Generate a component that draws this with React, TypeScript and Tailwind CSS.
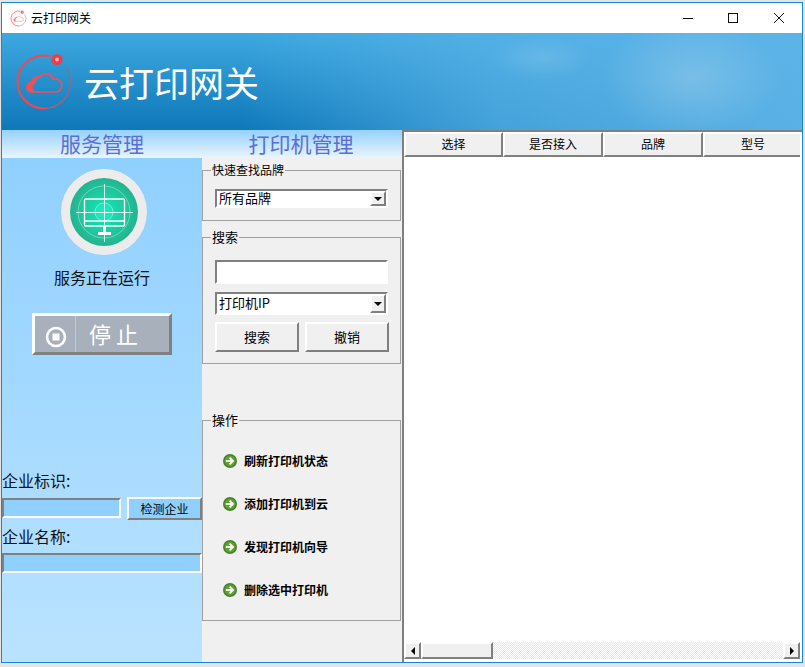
import React from "react";

const raised = "border-2 border-t-white border-l-white border-r-[#808080] border-b-[#808080]";
const sunken = "border-2 border-t-[#808080] border-l-[#808080] border-r-white border-b-white";

function Logo({ size, faded }: { size: number; faded?: boolean }) {
  const id = faded ? "a1" : "a2";
  return (
    <svg width={size} height={size} viewBox="0 0 60 60" fill="none" className={faded ? "opacity-80" : ""}>
      <defs>
        <linearGradient id={id} x1="30" y1="56" x2="52" y2="15" gradientUnits="userSpaceOnUse">
          <stop offset="0" stopColor="#e0505f" />
          <stop offset="0.5" stopColor="#a0607a" />
          <stop offset="1" stopColor="#6a7a9a" />
        </linearGradient>
      </defs>
      <path d="M36.5 4.3 A26.5 26.5 0 1 0 30 56.5" stroke="#f5464f" strokeWidth={faded ? 3 : 2} />
      <path d="M30 56.5 A26.5 26.5 0 0 0 52.2 15.5" stroke={`url(#${id})`} strokeWidth={faded ? 2 : 1.4} />
      <circle cx="43" cy="7.5" r="5.5" fill="#f23b47" />
      <circle cx="43" cy="7.5" r="2" fill="#ffb0b0" />
      <path d="M19 40 C11 40 11 31 18 30 C19 25 24 24 26 25 C29 20 38 21 39 27 C46 26 49 31 47 36 C46 39 44 40 41 40 Z" stroke="#f54d55" strokeWidth="1.6" />
      <path d="M19 40 C11 40 11 31 18 30 C19 25 24 24 26 25 C23 27 21 29 22 31 C18 32 17 37 22 40 Z" fill="#f54d55" />
    </svg>
  );
}

function Monitor() {
  return (
    <div className="w-[86px] h-[86px] rounded-full bg-[#ececec] flex items-center justify-center">
      <div className="w-[68px] h-[68px] rounded-full bg-[radial-gradient(circle,#10eeba_0%,#1fc49c_50%,#2c9a7c_100%)] flex items-center justify-center">
        <svg width="68" height="68" viewBox="0 0 68 68" fill="none">
          <circle cx="34" cy="34" r="26" stroke="#ffffff" strokeOpacity="0.35" />
          <circle cx="34" cy="34" r="9" stroke="#ffffff" strokeOpacity="0.4" fill="#20f0c0" fillOpacity="0.4" />
          <path d="M6 34.5H63M34.5 6V64" stroke="#ffffff" strokeOpacity="0.85" />
          <rect x="14.5" y="21" width="40" height="27" rx="1" stroke="#ffffff" strokeWidth="1.4" />
          <path d="M14.5 43H54.5" stroke="#ffffff" strokeWidth="1.4" />
          <path d="M33 48H36V54H41V57H28V54H33Z" fill="#ffffff" />
        </svg>
      </div>
    </div>
  );
}

function Arrow() {
  return (
    <svg width="14" height="14" viewBox="0 0 14 14" className="shrink-0">
      <circle cx="7" cy="7" r="7" fill="#4a8228" />
      <circle cx="7" cy="7" r="5.4" fill="#5f9e38" />
      <path d="M2.8 7H9M6.6 3.6L10 7L6.6 10.4" fill="none" stroke="#f4f8ea" strokeWidth="2" />
    </svg>
  );
}

function Drop({ h }: { h: string }) {
  return (
    <div className={`w-[16px] ${h} ${raised} bg-[#f0f0f0] flex items-center justify-center`}>
      <div className="w-0 h-0 border-x-[4px] border-x-transparent border-t-[4px] border-t-black" />
    </div>
  );
}

function Select({ text, h, ml }: { text: string; h: string; ml: string }) {
  return (
    <div className={`${ml} w-[173px] ${h} ${sunken} bg-white flex items-center justify-between text-[13px] leading-none pl-[2px]`}>
      <span className="-mt-[2px]">{text}</span>
      <Drop h="h-full" />
    </div>
  );
}

function Group({ title, className, size, children }: { title: string; className: string; size: string; children: React.ReactNode }) {
  return (
    <fieldset className={`w-[199px] border border-[#a0a0a0] ${className}`}>
      <legend className={`ml-[8px] px-[1px] h-[16px] leading-[16px] ${size}`}>{title}</legend>
      {children}
    </fieldset>
  );
}

const actions = ["刷新打印机状态", "添加打印机到云", "发现打印机向导", "删除选中打印机"];
const columns = [
  { name: "选择", width: "w-[99px]" },
  { name: "是否接入", width: "w-[100px]" },
  { name: "品牌", width: "w-[100px]" },
  { name: "型号", width: "w-[100px]" },
];

export default function App() {
  return (
    <div className="w-[805px] h-[667px] bg-[#e4e4e4] pt-[2px] overflow-hidden text-black font-['Noto_Sans_CJK_SC','Noto_Sans',sans-serif]">
      <div className="ml-[1px] w-[802px] h-[661px] border border-[#1a86d8] bg-white flex flex-col">
        <div className="h-[30px] bg-white flex items-center shrink-0">
          <div className="ml-[8px] w-[17px] flex justify-center"><Logo size={17} faded /></div>
          <span className="ml-[4px] text-[12px] leading-none">云打印网关</span>
          <div className="ml-auto flex items-center mb-[1px]">
            <svg width="12" height="12" viewBox="0 0 12 12" className="mr-[33px]"><path d="M1 6.5H11" stroke="#111" /></svg>
            <svg width="12" height="12" viewBox="0 0 12 12" className="mr-[34px]"><rect x="1.5" y="1.5" width="9" height="9" fill="none" stroke="#111" /></svg>
            <svg width="12" height="12" viewBox="0 0 12 12" className="mr-[17px]"><path d="M1 1L11 11M11 1L1 11" stroke="#111" /></svg>
          </div>
        </div>

        <div className="h-[97px] shrink-0 flex items-center pl-[12px] bg-[radial-gradient(ellipse_50px_22px_at_540px_25px,rgba(255,255,255,0.12),transparent),radial-gradient(ellipse_90px_60px_at_690px_45px,rgba(200,225,240,0.3),transparent),linear-gradient(90deg,rgba(90,180,235,0)_30%,rgba(92,180,232,0.7)_62%,rgba(94,180,232,0.95)_100%),linear-gradient(180deg,#3ea8e0,#0e78b9)]">
          <Logo size={60} />
          <span className="ml-[10px] -mt-[1px] text-[35px] leading-none text-white">云打印网关</span>
        </div>

        <div className="flex flex-1 min-h-0">
          <div className="w-[400px] flex flex-col shrink-0">
            <div className="h-[28px] shrink-0 flex bg-[linear-gradient(180deg,#96d1fc,#eaf5fd)] text-[21px] leading-[26px] text-[#5b6fd2]">
              <div className="w-[200px] text-center">服务管理</div>
              <div className="w-[198px] text-center">打印机管理</div>
            </div>
            <div className="flex flex-1 min-h-0">
              <div className="w-[200px] shrink-0 bg-[linear-gradient(180deg,#90d0ff,#bae3ff)] flex flex-col">
                <div className="mt-[11px] flex justify-center pl-[4px]"><Monitor /></div>
                <div className="mt-[10px] h-[24px] leading-[24px] text-[16px] text-center text-[#111]">服务正在运行</div>
                <div className={`mt-[24px] ml-[30px] w-[140px] h-[42px] ${raised} border-[3px] border-t-[#f2f2f2] border-l-[#f2f2f2] bg-[#a8b0bc] flex items-center text-white`}>
                  <div className="w-[41px] h-full flex items-center justify-center border-r border-r-[#c4cad2]">
                    <svg width="22" height="22" viewBox="0 0 22 22" className="ml-[2px] mt-[6px]">
                      <circle cx="11" cy="11" r="9" fill="none" stroke="#fff" strokeWidth="2.6" />
                      <rect x="7.5" y="7.5" width="7" height="7" fill="#fff" />
                    </svg>
                  </div>
                  <span className="ml-[13px] -mt-[3px] text-[22px] leading-none">停 止</span>
                </div>
                <div className="mt-[113px] h-[24px] leading-[24px] text-[16px] text-[#111]">企业标识:</div>
                <div className="mt-[5px] flex items-start">
                  <div className={`mt-[1px] w-[119px] h-[20px] ${sunken} bg-[#90d0ff]`} />
                  <div className={`ml-[6px] w-[75px] h-[23px] ${raised} bg-[#90d0ff] text-[12px] leading-[19px] text-center`}>检测企业</div>
                </div>
                <div className="mt-[4px] h-[24px] leading-[24px] text-[16px] text-[#111]">企业名称:</div>
                <div className={`mt-[5px] w-[200px] h-[20px] ${sunken} bg-[#90d0ff]`} />
              </div>

              <div className="w-[200px] shrink-0 bg-[#f0f0f0] flex flex-col">
                <Group title="快速查找品牌" size="text-[12px]" className="mt-[4px] h-[59px]">
                  <div className="mt-[11px]"><Select text="所有品牌" h="h-[19px]" ml="ml-[12px]" /></div>
                </Group>
                <Group title="搜索" size="text-[13px]" className="mt-[8px] h-[135px]">
                  <div className={`mt-[15px] ml-[12px] w-[173px] h-[24px] ${sunken} bg-white`} />
                  <div className="mt-[8px]"><Select text="打印机IP" h="h-[23px]" ml="ml-[12px]" /></div>
                  <div className="mt-[7px] ml-[12px] flex gap-[6px]">
                    <div className={`w-[84px] h-[30px] ${raised} bg-[#f0f0f0] text-[13px] leading-[26px] text-center`}>搜索</div>
                    <div className={`w-[84px] h-[30px] ${raised} bg-[#f0f0f0] text-[13px] leading-[26px] text-center`}>撤销</div>
                  </div>
                </Group>
                <Group title="操作" size="text-[13px]" className="mt-[48px] h-[209px]">
                  <div className="mt-[11px] pl-[20px] flex flex-col">
                    {actions.map((a) => (
                      <div key={a} className="h-[43px] flex items-center gap-[7px] text-[12px] font-bold">
                        <Arrow />
                        <span>{a}</span>
                      </div>
                    ))}
                  </div>
                </Group>
              </div>
            </div>
          </div>

          <div className="flex-1 min-w-0 flex flex-col border-l-2 border-t-2 border-l-[#808080] border-t-[#808080] pr-[2px] pb-[3px] bg-white">
            <div className="h-[25px] shrink-0 flex overflow-hidden">
              {columns.map((c) => (
                <div key={c.name} className={`${c.width} shrink-0 h-full ${raised} bg-[#f0f0f0] text-[12px] leading-[19px] text-center`}>{c.name}</div>
              ))}
            </div>
            <div className="flex-1" />
            <div className="h-[17px] shrink-0 flex bg-[repeating-conic-gradient(#e8e8e8_0_25%,#ffffff_0_50%)] bg-[length:2px_2px]">
              <div className={`w-[17px] h-full ${raised} bg-[#f0f0f0] flex items-center justify-center`}>
                <div className="w-0 h-0 border-y-[4px] border-y-transparent border-r-[4px] border-r-black" />
              </div>
              <div className={`w-[72px] h-full ${raised} bg-[#f0f0f0]`} />
              <div className={`ml-auto w-[17px] h-full ${raised} bg-[#f0f0f0] flex items-center justify-center`}>
                <div className="w-0 h-0 border-y-[4px] border-y-transparent border-l-[4px] border-l-black" />
              </div>
            </div>
          </div>
        </div>
      </div>
    </div>
  );
}
